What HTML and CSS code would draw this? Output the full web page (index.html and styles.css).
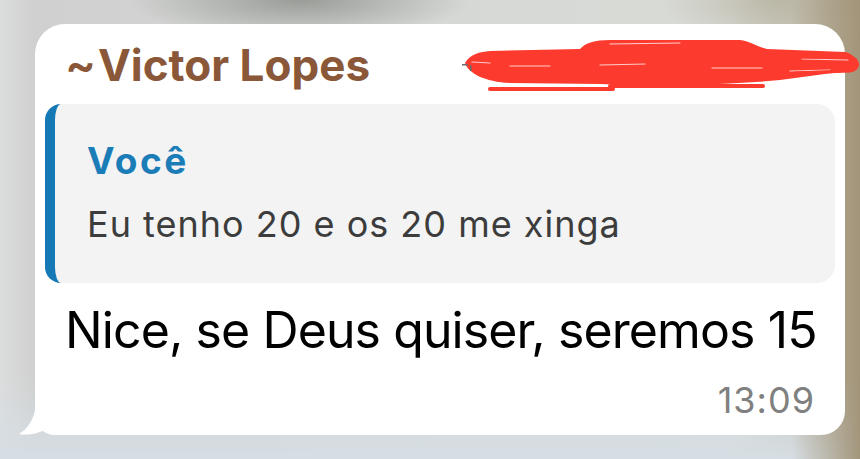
FILE: index.html
```html
<!DOCTYPE html>
<html lang="pt">
<head>
<meta charset="utf-8">
<link rel="stylesheet" href="styles.css">
</head>
<body>
  <div class="bubble">
    <div class="sender">
      <span class="tilde">~</span><span class="name">Victor Lopes</span>
    </div>
    <svg class="scribble" width="410" height="70" viewBox="0 0 410 70">
      <path fill="#fd3a2e" d="M15,33 C20,24 30,22 40,21 L130,19 C135,13 145,10 160,10 L290,10 C300,11 305,16 317,19 L395,22 C405,24 409,33 405,38 C400,42 380,43 360,46 L330,50 C280,55 200,56 150,54 L60,53 C35,52 18,43 15,33 Z"/>
      <g stroke="#ffffff" stroke-opacity="0.75" stroke-width="1.2" stroke-linecap="round">
        <line x1="22" y1="32" x2="40" y2="33"/>
        <line x1="60" y1="36" x2="100" y2="36"/>
        <line x1="150" y1="35" x2="195" y2="34"/>
        <line x1="262" y1="38" x2="312" y2="38"/>
        <line x1="340" y1="41" x2="380" y2="40"/>
        <line x1="352" y1="29" x2="398" y2="30"/>
        <line x1="160" y1="14" x2="230" y2="13"/>
      </g>
      <path d="M340,27 L400,27 C410,29 410,40 400,41 L345,43" fill="none" stroke="#fd3a2e" stroke-width="3" stroke-linecap="round"/>
      <g stroke="#fd3a2e" stroke-width="4" stroke-linecap="round">
        <line x1="40" y1="59" x2="163" y2="59"/>
        <line x1="160" y1="56" x2="313" y2="56"/>
      </g>
      <g fill="#6b6b6b">
        <rect x="12" y="34" width="6" height="1.5"/>
        <rect x="20" y="35" width="1.5" height="6"/>
      </g>
    </svg>
    <div class="quote">
      <div class="quote-author">Você</div>
      <div class="quote-text">Eu tenho 20 e os 20 me xinga</div>
    </div>
    <div class="message">Nice, se Deus quiser, seremos 15</div>
    <div class="time">13:09</div>
    <svg class="tail" width="56" height="48" viewBox="0 0 56 48">
      <path fill="#ffffff" d="M20,0 C20,25 14,38 2,45 C12,47 25,44 31,38 C36,43 42,46 55,46 L55,0 Z"/>
    </svg>
  </div>
</body>
</html>
```

FILE: styles.css
```css
html, body {
  margin: 0;
  padding: 0;
}

body {
  width: 860px;
  height: 459px;
  overflow: hidden;
  font-family: "Inter", "Liberation Sans", sans-serif;
  background:
    linear-gradient(to right, rgba(160,148,122,0) 92%, rgba(160,146,118,0.95) 100%),
    radial-gradient(ellipse 170px 40px at 300px 0px, rgba(150,153,148,0.95), rgba(150,153,148,0)),
    radial-gradient(ellipse 120px 50px at 780px 0px, rgba(185,182,165,0.9), rgba(185,182,165,0)),
    linear-gradient(to bottom, rgba(214,222,228,0) 82%, rgba(214,222,228,1) 100%),
    linear-gradient(to right, #dcdddd 0%, #cfd0cf 4%, #d6d8d6 50%, #d9dbd6 85%, #c2bcab 95%);
  padding: 24px 15px 24px 35px;
  box-sizing: border-box;
}

.bubble {
  position: relative;
  width: 810px;
  height: 411px;
  box-sizing: border-box;
  background: #ffffff;
  border-radius: 30px 30px 24px 20px;
  padding: 18px 10px 15px 10px;
}

.sender {
  display: flex;
  align-items: baseline;
  padding-left: 20px;
  height: 44px;
  line-height: 44px;
  font-weight: 700;
  color: #8a5838;
}

.tilde {
  font-size: 46px;
  font-weight: 600;
  margin-right: 2px;
}

.name {
  font-size: 44px;
}

.scribble {
  position: absolute;
  left: 415px;
  top: 6px;
}

.quote {
  margin-top: 18px;
  height: 179px;
  box-sizing: border-box;
  background: #f3f3f3;
  border-left: 10px solid #1479b5;
  border-radius: 16px 18px 18px 16px;
  padding: 37px 20px 0 32px;
}

.quote-author {
  font-size: 37px;
  line-height: 40px;
  font-weight: 700;
  letter-spacing: 2.5px;
  color: #1b7db8;
}

.quote-text {
  margin-top: 26px;
  font-size: 36px;
  line-height: 34px;
  letter-spacing: 1px;
  color: #3c3c3c;
  white-space: nowrap;
}

.message {
  margin-top: 19px;
  padding-left: 20px;
  font-size: 50px;
  line-height: 56px;
  letter-spacing: -0.9px;
  white-space: nowrap;
  color: #000000;
}

.time {
  margin-top: 22px;
  padding-right: 20px;
  text-align: right;
  font-size: 36px;
  line-height: 40px;
  letter-spacing: 1px;
  color: #808080;
}

.tail {
  position: absolute;
  left: -18px;
  bottom: -2px;
}
```
